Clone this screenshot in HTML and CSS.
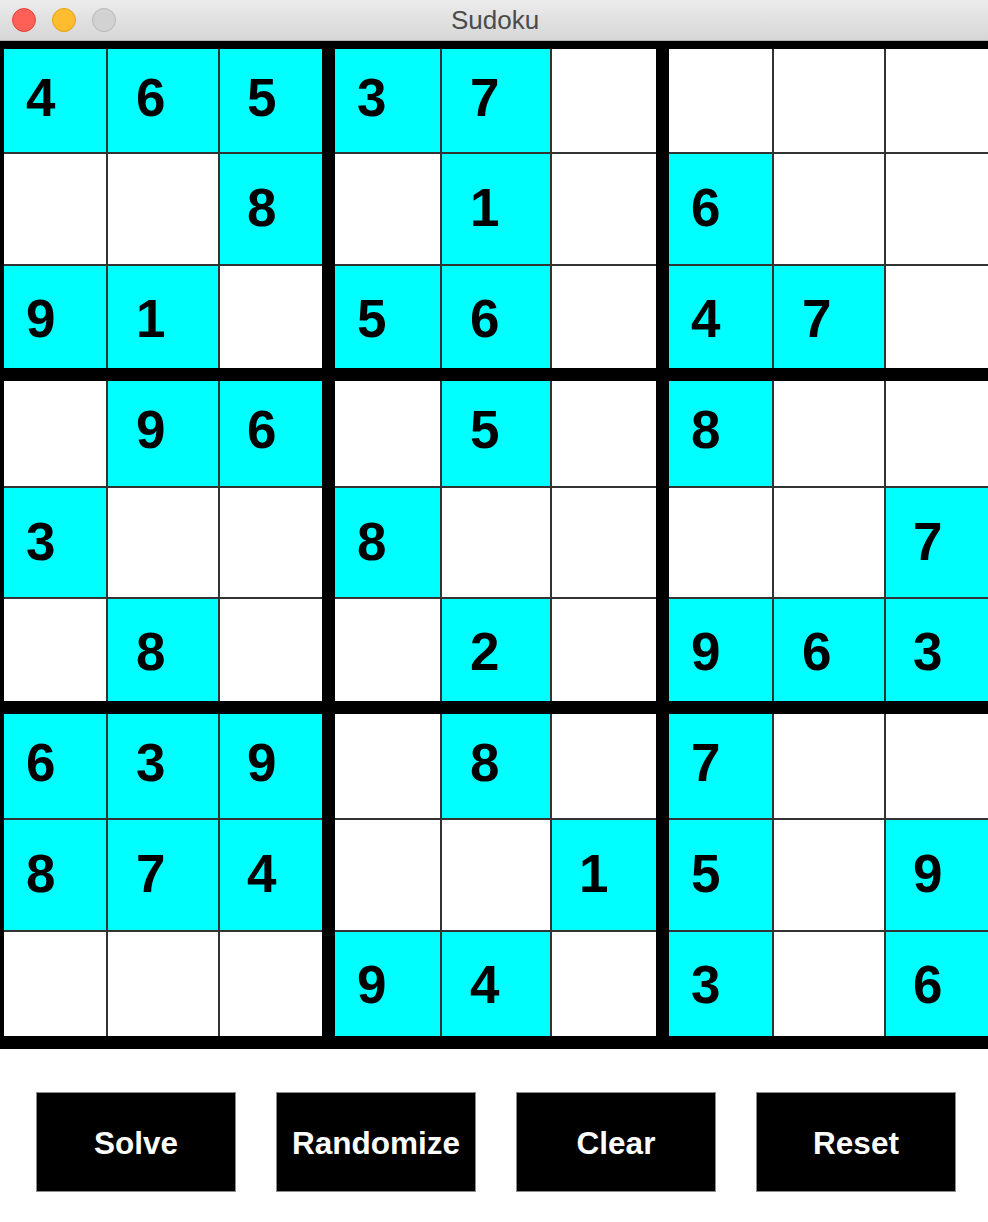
FILE: index.html
```html
<!DOCTYPE html>
<html>
<head>
<meta charset="utf-8">
<title>Sudoku</title>
<link rel="stylesheet" href="styles.css">
</head>
<body>
<div class="window">
  <div class="titlebar">
    <div class="lights">
      <span class="light red"></span>
      <span class="light yellow"></span>
      <span class="light grey"></span>
    </div>
    <div class="title">Sudoku</div>
  </div>
  <div class="board">
    <div class="block br1 bc1">
      <div class="cell f">4</div><div class="cell f">6</div><div class="cell f">5</div>
      <div class="cell"></div><div class="cell"></div><div class="cell f">8</div>
      <div class="cell f">9</div><div class="cell f">1</div><div class="cell"></div>
    </div>
    <div class="block br1 bc2">
      <div class="cell f">3</div><div class="cell f">7</div><div class="cell"></div>
      <div class="cell"></div><div class="cell f">1</div><div class="cell"></div>
      <div class="cell f">5</div><div class="cell f">6</div><div class="cell"></div>
    </div>
    <div class="block br1 bc3">
      <div class="cell"></div><div class="cell"></div><div class="cell"></div>
      <div class="cell f">6</div><div class="cell"></div><div class="cell"></div>
      <div class="cell f">4</div><div class="cell f">7</div><div class="cell"></div>
    </div>
    <div class="block br2 bc1">
      <div class="cell"></div><div class="cell f">9</div><div class="cell f">6</div>
      <div class="cell f">3</div><div class="cell"></div><div class="cell"></div>
      <div class="cell"></div><div class="cell f">8</div><div class="cell"></div>
    </div>
    <div class="block br2 bc2">
      <div class="cell"></div><div class="cell f">5</div><div class="cell"></div>
      <div class="cell f">8</div><div class="cell"></div><div class="cell"></div>
      <div class="cell"></div><div class="cell f">2</div><div class="cell"></div>
    </div>
    <div class="block br2 bc3">
      <div class="cell f">8</div><div class="cell"></div><div class="cell"></div>
      <div class="cell"></div><div class="cell"></div><div class="cell f">7</div>
      <div class="cell f">9</div><div class="cell f">6</div><div class="cell f">3</div>
    </div>
    <div class="block br3 bc1">
      <div class="cell f">6</div><div class="cell f">3</div><div class="cell f">9</div>
      <div class="cell f">8</div><div class="cell f">7</div><div class="cell f">4</div>
      <div class="cell"></div><div class="cell"></div><div class="cell"></div>
    </div>
    <div class="block br3 bc2">
      <div class="cell"></div><div class="cell f">8</div><div class="cell"></div>
      <div class="cell"></div><div class="cell"></div><div class="cell f">1</div>
      <div class="cell f">9</div><div class="cell f">4</div><div class="cell"></div>
    </div>
    <div class="block br3 bc3">
      <div class="cell f">7</div><div class="cell"></div><div class="cell"></div>
      <div class="cell f">5</div><div class="cell"></div><div class="cell f">9</div>
      <div class="cell f">3</div><div class="cell"></div><div class="cell f">6</div>
    </div>
  </div>
  <div class="buttons">
    <button class="btn">Solve</button>
    <button class="btn">Randomize</button>
    <button class="btn">Clear</button>
    <button class="btn">Reset</button>
  </div>
</div>
</body>
</html>
```

FILE: styles.css
```css
html, body {
  margin: 0;
  padding: 0;
  background: #ffffff;
}
body {
  width: 988px;
  height: 1222px;
  overflow: hidden;
  font-family: "Liberation Sans", Arial, sans-serif;
}
.window {
  width: 988px;
  overflow: hidden;
}
.titlebar {
  position: relative;
  height: 40px;
  background: linear-gradient(#ececec, #d6d6d6);
  border-bottom: 1px solid #b4b4b4;
  display: flex;
  align-items: center;
  justify-content: center;
}
.lights {
  position: absolute;
  left: 12px;
  top: 8px;
  display: flex;
  gap: 16px;
}
.light {
  width: 24px;
  height: 24px;
  border-radius: 50%;
  box-sizing: border-box;
}
.red { background: #fe5f57; border: 1px solid #e2463f; }
.yellow { background: #febc2e; border: 1px solid #e1a116; }
.grey { background: #d2d2d2; border: 1px solid #b8b8b8; }
.title {
  font-size: 26px;
  color: #4b4b4b;
  line-height: 40px;
  padding-left: 2px;
}
.board {
  width: 1000px;
  background: #000;
  padding: 8px 0 13px 4px;
  display: grid;
  grid-template-columns: 318px 321px 320px;
  grid-template-rows: 319px 320px 322px;
  gap: 13px;
}
.block {
  display: grid;
  gap: 2px;
  background: #333333;
}
.bc1 { grid-template-columns: 102px 110px 102px; }
.bc2 { grid-template-columns: 105px 108px 104px; }
.bc3 { grid-template-columns: 103px 110px 103px; }
.br1 { grid-template-rows: 103px 110px 102px; }
.br2 { grid-template-rows: 105px 109px 102px; }
.br3 { grid-template-rows: 104px 110px 104px; }
.cell {
  background: #ffffff;
  font-weight: bold;
  font-size: 53px;
  line-height: 53px;
  color: #000;
  box-sizing: border-box;
}
.cell.f { background: #00ffff; }
.cell:nth-child(3n+1) { padding-left: 22px; }
.cell:nth-child(3n+2) { padding-left: 28px; }
.cell:nth-child(3n) { padding-left: 27px; }
.cell:nth-child(-n+3) { padding-top: 22px; }
.cell:nth-child(n+4) { padding-top: 27px; }
.cell:nth-child(n+7) { padding-top: 26px; }
.buttons {
  display: flex;
  gap: 40px;
  padding: 43px 0 0 36px;
}
.btn {
  width: 200px;
  height: 100px;
  box-sizing: border-box;
  background: #000;
  border: 1px solid #8c8c8c;
  color: #fff;
  font-family: "Liberation Sans", Arial, sans-serif;
  font-weight: bold;
  font-size: 31.5px;
  padding: 2px 0 0 0;
  margin: 0;
}
```
